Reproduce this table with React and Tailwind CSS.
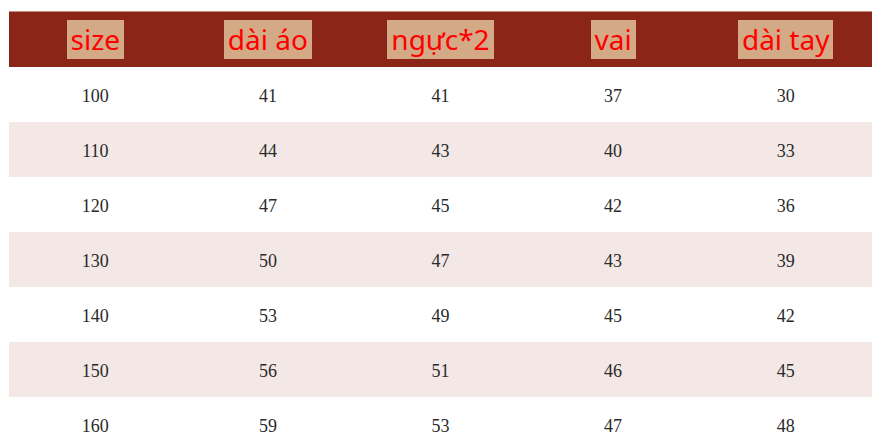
const HEADERS = ['size', 'dài áo', 'ngực*2', 'vai', 'dài tay'];

const ROWS = [
  ['100', '41', '41', '37', '30'],
  ['110', '44', '43', '40', '33'],
  ['120', '47', '45', '42', '36'],
  ['130', '50', '47', '43', '39'],
  ['140', '53', '49', '45', '42'],
  ['150', '56', '51', '46', '45'],
  ['160', '59', '53', '47', '48'],
];

export default function App() {
  return (
    <div className="w-[882px] h-[447px] overflow-hidden bg-white pt-[11px] pl-[9px] pr-[10px]">
      <div className="grid grid-cols-5 h-[56px] bg-[#8a2517] border-t border-[#c98a80]">
        {HEADERS.map((h) => (
          <div key={h} className="flex items-center justify-center">
            <span className="bg-[#d4a985] px-[4px] pt-[2px] pb-[3px] text-[28px] leading-[34px] text-[#ff0000] font-['Noto_Sans',sans-serif]">
              {h}
            </span>
          </div>
        ))}
      </div>
      {ROWS.map((row, i) => (
        <div
          key={row[0]}
          className={`grid grid-cols-5 h-[55px] pt-[4px] ${i % 2 === 1 ? 'bg-[#f3e8e6]' : 'bg-white'}`}
        >
          {row.map((v, j) => (
            <div
              key={j}
              className="flex items-center justify-center text-[18px] text-[#2a2a2a] font-['Liberation_Serif',serif]"
            >
              {v}
            </div>
          ))}
        </div>
      ))}
    </div>
  );
}
